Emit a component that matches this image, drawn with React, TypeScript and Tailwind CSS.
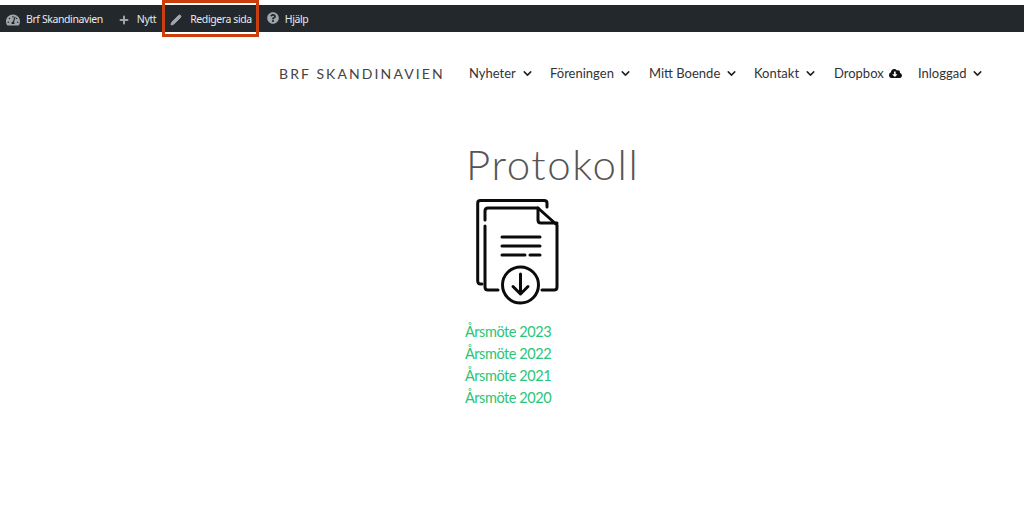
import { ChevronDown, Plus, Pencil } from "lucide-react"
import { FaCloudDownloadAlt, FaQuestionCircle, FaTachometerAlt } from "react-icons/fa"

const sans = "font-['Noto_Sans','Open_Sans',sans-serif]"

function NavItem({ label, width }: { label: string; width: string }) {
  return (
    <a className={`flex items-center gap-[5px] ${width}`}>
      <span>{label}</span>
      <ChevronDown className="h-[13px] w-[13px] shrink-0 text-[#222]" strokeWidth={2.8} />
    </a>
  )
}

function ProtocolIcon() {
  return (
    <svg width="84" height="106" viewBox="0 0 84 106" fill="none" stroke="#0b0b0b" strokeWidth="3" strokeLinecap="round" strokeLinejoin="round">
      <path d="M6 85H4.5Q1.7 85 1.7 82V4Q1.7 1.5 4.5 1.5H68Q71 1.5 71 4V8" />
      <path d="M9 27V88Q9 91 12 91H22" />
      <path d="M9 21V12Q9 9 12 9H62L81 26V88Q81 91 78 91H66" />
      <path d="M62 9V21Q62 24 65 24H81" />
      <path d="M26 38H64M26 47H64M26 56H49M54 56H64" />
      <circle cx="44.5" cy="86" r="18" />
      <path d="M44.5 75V95M37 87.5L44.5 95L52 87.5" />
    </svg>
  )
}

export default function App() {
  return (
    <div className="min-h-[520px] bg-white font-['Lato',sans-serif]">
      <div className="h-[5px] bg-white" />
      <div className={`flex h-[27px] items-center bg-[#23282d] pl-[6px] pt-[2px] text-[10.5px] tracking-[-0.4px] text-[#e8eaec] ${sans}`}>
        <FaTachometerAlt className="mr-[6px] h-[14px] w-[14px] text-[#a0a5aa]" />
        <span>Brf Skandinavien</span>
        <Plus className="ml-[15px] mr-[7px] h-[12px] w-[12px] text-[#a0a5aa]" strokeWidth={4} />
        <span>Nytt</span>
        <div className="relative ml-[14px] flex items-center">
          <Pencil className="mr-[8px] h-[12px] w-[12px] text-[#a0a5aa]" fill="#a0a5aa" />
          <span>Redigera sida</span>
          <div className="absolute left-[-8px] top-[-12px] h-[37px] w-[97px] border-[3px] border-[#cc3d0c]" />
        </div>
        <FaQuestionCircle className="ml-[15px] mr-[6px] h-[12px] w-[12px] -translate-y-[2px] text-[#a0a5aa]" />
        <span>Hjälp</span>
      </div>

      <header className="flex h-[83px] items-center pl-[279px] text-[13px] text-[#333]">
        <a className="w-[190px] text-[14px] tracking-[2.1px] text-[#444]">BRF SKANDINAVIEN</a>
        <nav className="flex items-center">
          <NavItem label="Nyheter" width="w-[81px]" />
          <NavItem label="Föreningen" width="w-[99px]" />
          <NavItem label="Mitt Boende" width="w-[105px]" />
          <NavItem label="Kontakt" width="w-[80px]" />
          <a className="flex w-[84px] items-center gap-[5px]">
            <span>Dropbox</span>
            <FaCloudDownloadAlt className="h-[13px] w-[13px] text-[#111]" />
          </a>
          <NavItem label="Inloggad" width="w-[70px]" />
        </nav>
      </header>

      <main className="pl-[465px]">
        <h1 className="pl-[1px] pt-[25px] text-[42px] font-light leading-[48px] tracking-[1.6px] text-[#555]">Protokoll</h1>
        <div className="pl-[11px] pt-[11px]">
          <ProtocolIcon />
        </div>
        <ul className="mt-[16px] text-[14.5px] leading-[22px] tracking-[-0.45px] text-[#2bc573]">
          <li>Årsmöte 2023</li>
          <li>Årsmöte 2022</li>
          <li>Årsmöte 2021</li>
          <li>Årsmöte 2020</li>
        </ul>
      </main>
    </div>
  )
}
